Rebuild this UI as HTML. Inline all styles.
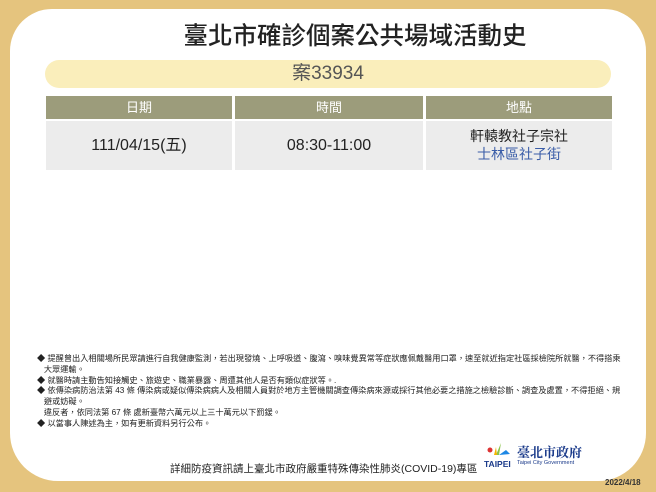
<!DOCTYPE html>
<html><head><meta charset="utf-8"><style>
body{margin:0;width:656px;height:492px;background:#e5c47e;position:relative;overflow:hidden;font-family:"Liberation Sans","Noto Sans CJK TC",sans-serif;}
.panel{position:absolute;left:10px;top:9px;width:636px;height:472px;background:#fff;border-radius:42px 42px 48px 48px;}
.title{position:absolute;left:0;width:710px;top:17px;text-align:center;font-size:24.5px;color:#222;font-weight:500;}
.pill{position:absolute;left:45px;top:60px;width:566px;height:28px;border-radius:14px;background:#faeebb;text-align:center;font-size:19px;line-height:28px;color:#555;}
.c{position:absolute;text-align:center;}
.h{top:96px;height:23px;line-height:23px;background:#9c9c7b;color:#fff;font-size:13px;}
.d{top:121px;height:49px;background:#ececec;color:#222;font-size:16px;}
.notes{position:absolute;left:37px;top:354px;font-size:8.2px;line-height:10.8px;color:#222;white-space:nowrap;}
.foot{position:absolute;left:170px;top:461px;font-size:10.5px;color:#222;}
.date{position:absolute;left:605px;top:478px;font-size:8px;font-weight:bold;color:#333;}
</style></head><body>
<div class="panel"></div>
<div class="title">臺北市確診個案公共場域活動史</div>
<div class="pill">案33934</div>
<div class="c h" style="left:46px;width:186px">日期</div>
<div class="c h" style="left:235px;width:188px">時間</div>
<div class="c h" style="left:426px;width:186px">地點</div>
<div class="c d" style="left:46px;width:186px;line-height:49px">111/04/15(五)</div>
<div class="c d" style="left:235px;width:188px;line-height:49px">08:30-11:00</div>
<div class="c d" style="left:426px;width:186px;font-size:14px;line-height:18px;padding-top:6px;height:43px">軒轅教社子宗社<br><span style="color:#3a5da8">士林區社子街</span></div>
<div class="notes">◆ 提醒曾出入相關場所民眾請進行自我健康監測，若出現發燒、上呼吸道、腹瀉、嗅味覺異常等症狀應佩戴醫用口罩，速至就近指定社區採檢院所就醫，不得搭乘<br>&nbsp;&nbsp;&nbsp;大眾運輸。<br>◆ 就醫時請主動告知接觸史、旅遊史、職業暴露、周遭其他人是否有類似症狀等。.<br>◆ 依傳染病防治法第 43 條 傳染病或疑似傳染病病人及相關人員對於地方主管機關調查傳染病來源或採行其他必要之措施之檢驗診斷、調查及處置，不得拒絕、規<br>&nbsp;&nbsp;&nbsp;避或妨礙。<br>&nbsp;&nbsp;&nbsp;違反者，依同法第 67 條 處新臺幣六萬元以上三十萬元以下罰鍰。<br>◆ 以當事人陳述為主，如有更新資料另行公布。</div>
<div class="foot">詳細防疫資訊請上臺北市政府嚴重特殊傳染性肺炎(COVID-19)專區</div>
<svg style="position:absolute;left:484px;top:441px" width="30" height="28" viewBox="0 0 30 28">
<circle cx="6" cy="9" r="2.5" fill="#d33"/><path d="M12 14 L17 2 L15 14 Z" fill="#8bc34a"/><path d="M15 14 L22 9 L26 13 Z" fill="#1e88e5"/><path d="M10 14 L12 6 L13 14Z" fill="#f4b400"/>
<text x="0" y="26" font-size="8.5" font-weight="bold" fill="#1a3a8a" font-family="Liberation Sans">TAIPEI</text></svg>
<div style="position:absolute;left:517px;top:442px;font-size:13px;font-weight:bold;color:#1a3a8a;font-family:'Noto Serif CJK SC',serif">臺北市政府</div>
<div style="position:absolute;left:517px;top:460px;font-size:5.5px;color:#1a3a8a">Taipei City Government</div>
<div class="date">2022/4/18</div>
</body></html>
